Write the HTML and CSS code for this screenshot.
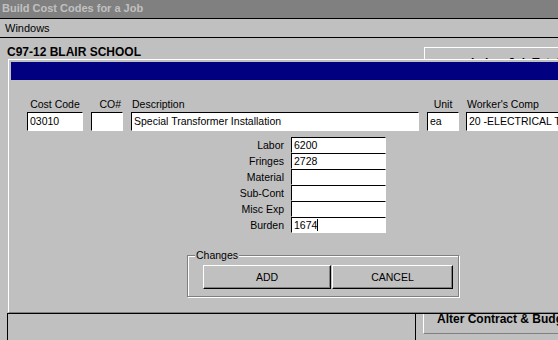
FILE: index.html
```html
<!DOCTYPE html>
<html lang="en">
<head>
    <meta charset="UTF-8">
    <title>Build Cost Codes for a Job</title>
    <link rel="stylesheet" href="styles.css">
</head>
<body>

<div class="app">
    <div class="titlebar">Build Cost Codes for a Job</div>
    <div class="menubar"><span class="menu-item">Windows</span></div>

    <div class="workspace">
        <div class="job-row">
            <div class="job-name">C97-12 BLAIR SCHOOL</div>
            <div class="side-box"><span class="side-title">Labor Job Totals</span></div>
        </div>
        <div class="filler"></div>
        <div class="bottom-panel">
            <div class="bottom-left"></div>
            <div class="bottom-right">
                <div class="alter-btn">Alter Contract &amp; Budget</div>
            </div>
        </div>

        <!-- Cost code dialog -->
        <div class="dialog">
            <div class="dialog-caption"></div>
            <div class="dialog-body">
                <div class="code-row">
                    <div class="col col-code">
                        <div class="col-label">Cost Code</div>
                        <div class="box">03010</div>
                    </div>
                    <div class="col col-co">
                        <div class="col-label">CO#</div>
                        <div class="box"></div>
                    </div>
                    <div class="col col-desc">
                        <div class="col-label">Description</div>
                        <div class="box">Special Transformer Installation</div>
                    </div>
                    <div class="col col-unit">
                        <div class="col-label">Unit</div>
                        <div class="box">ea</div>
                    </div>
                    <div class="col col-wc">
                        <div class="col-label">Worker's Comp</div>
                        <div class="box">20 -ELECTRICAL T</div>
                    </div>
                </div>

                <div class="costs">
                    <div class="cost-label">Labor</div>
                    <div class="box small">6200</div>
                    <div class="cost-label">Fringes</div>
                    <div class="box small">2728</div>
                    <div class="cost-label">Material</div>
                    <div class="box small"></div>
                    <div class="cost-label">Sub-Cont</div>
                    <div class="box small"></div>
                    <div class="cost-label">Misc Exp</div>
                    <div class="box small"></div>
                    <div class="cost-label">Burden</div>
                    <div class="box small">1674<span class="caret"></span></div>
                </div>

                <div class="group">
                    <span class="group-label">Changes</span>
                    <button class="btn btn-add">ADD</button>
                    <button class="btn btn-cancel">CANCEL</button>
                </div>
            </div>
        </div>
    </div>
</div>

</body>
</html>
```

FILE: styles.css
```css
body {
    margin: 0;
    background-color: #c0c0c0;
    font-family: "Liberation Sans", Arial, sans-serif;
    font-size: 10.5px;
    color: #000;
}
.app {
    width: 558px;
    height: 340px;
    overflow: hidden;
    background-color: #c0c0c0;
}
.titlebar {
    height: 18px;
    line-height: 17px;
    padding-left: 2px;
    background-color: #808080;
    color: #c0c0c0;
    font-size: 11px;
    font-weight: bold;
    border-bottom: 1px solid #000;
    white-space: nowrap;
}
.menubar {
    height: 18px;
    line-height: 18px;
    padding-left: 5px;
    font-size: 11px;
    border-bottom: 1px solid #000;
}
.workspace {
    position: relative;
    height: 302px;
    display: flex;
    flex-direction: column;
}
.job-row {
    display: flex;
    align-items: flex-start;
}
.job-name {
    padding: 7px 0 0 7px;
    line-height: 14px;
    font-size: 12px;
    font-weight: bold;
    white-space: nowrap;
}
.side-box {
    margin-left: auto;
    margin-top: 9px;
    width: 134px;
    height: 30px;
    flex-shrink: 0;
    box-sizing: border-box;
    border-top: 1px solid #fff;
    border-left: 1px solid #fff;
    padding: 8px 0 0 46px;
    font-size: 12px;
    font-weight: bold;
    line-height: 14px;
    white-space: nowrap;
    overflow: hidden;
}
.filler {
    flex: 1;
}
.bottom-panel {
    height: 27px;
    margin-left: 7px;
    box-sizing: border-box;
    border-top: 1px solid #000;
    border-left: 1px solid #000;
    display: flex;
}
.bottom-left {
    width: 408px;
    flex-shrink: 0;
    box-sizing: border-box;
    border-right: 1px solid #000;
}
.bottom-right {
    flex: 1;
    padding-left: 7px;
    overflow: hidden;
}
.alter-btn {
    height: 20px;
    box-sizing: border-box;
    border-left: 1px solid #fff;
    border-bottom: 1px solid #808080;
    padding-left: 13px;
    line-height: 10px;
    font-size: 12px;
    font-weight: bold;
    white-space: nowrap;
    overflow: hidden;
}

/* dialog window */
.dialog {
    position: absolute;
    top: 21px;
    left: 8px;
    right: -20px;
    bottom: 27px;
    box-sizing: border-box;
    border-top: 1px solid #fff;
    border-left: 1px solid #fff;
    border-bottom: 1px solid #808080;
    padding: 2px 0 0 2px;
    background-color: #c0c0c0;
}
.dialog-caption {
    height: 18px;
    background-color: #000080;
}
.dialog-body {
    padding: 17px 0 0 16px;
}
.code-row {
    display: flex;
    align-items: flex-end;
}
.col {
    flex: 0 0 auto;
}
.col-code { width: 56px; }
.col-co { width: 32px; margin-left: 8px; }
.col-desc { width: 288px; margin-left: 8px; }
.col-unit { width: 32px; margin-left: 8px; }
.col-wc { width: 100px; margin-left: 7px; }
.col-label {
    height: 15px;
    line-height: 15px;
    white-space: nowrap;
}
.col-code .col-label,
.col-unit .col-label {
    text-align: center;
}
.col-co .col-label {
    text-align: right;
    padding-right: 2px;
}
.col-desc .col-label,
.col-wc .col-label {
    padding-left: 1px;
}
.box {
    height: 19px;
    line-height: 17px;
    box-sizing: border-box;
    border: 1px solid;
    border-color: #000 #fff #fff #000;
    background-color: #fff;
    padding-left: 2px;
    white-space: nowrap;
    overflow: hidden;
}
.box.small {
    height: 16px;
    line-height: 14px;
}
.caret {
    display: inline-block;
    width: 1px;
    height: 12px;
    background-color: #000;
    vertical-align: -2px;
}
.costs {
    display: grid;
    grid-template-columns: 80px 95px;
    grid-auto-rows: 16px;
    column-gap: 7px;
    margin: 6px 0 0 177px;
}
.cost-label {
    text-align: right;
    line-height: 16px;
    white-space: nowrap;
}
.group {
    position: relative;
    width: 272px;
    height: 42px;
    box-sizing: border-box;
    margin: 22px 0 0 160px;
    border: 1px solid #808080;
    box-shadow: inset 1px 1px 0 #fff, 1px 1px 0 #fff;
    padding: 9px 0 0 15px;
    display: flex;
    gap: 1px;
}
.group-label {
    position: absolute;
    top: -7px;
    left: 7px;
    padding: 0 1px;
    line-height: 13px;
    background-color: #c0c0c0;
}
.btn {
    height: 24px;
    padding: 0;
    box-sizing: border-box;
    border: 1px solid;
    border-color: #fff #000 #000 #fff;
    box-shadow: inset -1px -1px 0 #808080;
    background-color: #c0c0c0;
    font-family: "Liberation Sans", Arial, sans-serif;
    font-size: 10.5px;
    color: #000;
}
.btn-add { width: 128px; }
.btn-cancel { width: 121px; }
```
